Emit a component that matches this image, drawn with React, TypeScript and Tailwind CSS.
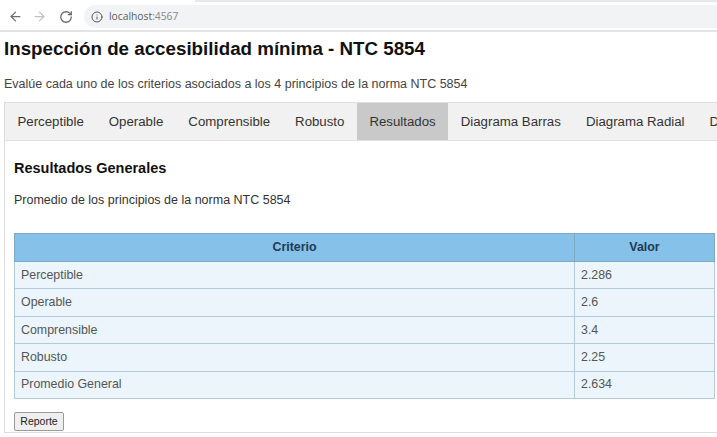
import { ArrowLeft, ArrowRight, RotateCw, Info } from "lucide-react";

const rows = [
  ["Perceptible", "2.286"],
  ["Operable", "2.6"],
  ["Comprensible", "3.4"],
  ["Robusto", "2.25"],
  ["Promedio General", "2.634"],
];
const tabs = ["Perceptible", "Operable", "Comprensible", "Robusto", "Resultados", "Diagrama Barras", "Diagrama Radial", "Diagrama"];

export default function App() {
  return (
    <div className="w-[717px] h-[437px] overflow-hidden bg-white font-['Liberation_Sans',Arial,sans-serif] text-[#333]">
      <div className="h-[2px] ml-[195px] bg-[#e8e8e8]" />
      <div className="h-[30px] flex items-center border-b-2 border-[#e4e4e4] pl-[8px] pt-[1px]">
        <ArrowLeft size={15} strokeWidth={2} className="text-[#6b6e72]" />
        <ArrowRight size={15} strokeWidth={2} className="ml-[9px] text-[#c0c2c5]" />
        <RotateCw size={14} strokeWidth={2.2} className="ml-[12px] text-[#666a6e]" />
        <div className="ml-[11px] flex-1 h-[23px] rounded-l-full bg-[#f1f3f4] flex items-center pl-[7px]">
          <Info size={12} strokeWidth={2} className="text-[#55585c]" />
          <span className="ml-[6px] text-[10.3px] font-['Open_Sans',sans-serif] text-[#5a5d61]">
            localhost<span className="text-[#85888c]">:4567</span>
          </span>
        </div>
      </div>
      <h1 className="ml-[4px] mt-[5px] text-[18.75px] leading-[24px] font-bold text-[#111]">Inspección de accesibilidad mínima - NTC 5854</h1>
      <p className="ml-[4px] mt-[14px] text-[12.5px] leading-[18px] text-[#444]">Evalúe cada uno de los criterios asociados a los 4 principios de la norma NTC 5854</p>
      <div className="ml-[4px] mt-[9px] h-[331px] border-l border-b border-[#dcdcdc]">
        <div className="h-[39px] flex bg-[#f1f1f1] border-y border-[#e0e0e0] overflow-hidden whitespace-nowrap text-[13.25px]">
          {tabs.map((t) => (
            <div key={t} className={"px-[12.5px] pt-[1px] flex items-center shrink-0 " + (t === "Resultados" ? "bg-[#c9c9c9]" : "")}>{t}</div>
          ))}
        </div>
        <div className="pl-[9px]">
          <h2 className="mt-[18px] text-[14.5px] leading-[18px] font-bold text-[#111]">Resultados Generales</h2>
          <p className="mt-[14px] text-[12.5px] leading-[18px]">Promedio de los principios de la norma NTC 5854</p>
          <table className="mt-[24px] w-[701px] table-fixed border-collapse text-[12.4px] text-[#555]">
            <colgroup>
              <col className="w-[560px]" />
              <col />
            </colgroup>
            <thead>
              <tr className="h-[28px] bg-[#85c1e9] text-[#1f3a52]">
                <th className="border border-[#7fa8c4] font-bold text-center">Criterio</th>
                <th className="border border-[#7fa8c4] font-bold text-center">Valor</th>
              </tr>
            </thead>
            <tbody>
              {rows.map(([a, b]) => (
                <tr key={a} className="h-[27.4px] bg-[#ebf5fb]">
                  <td className="border border-[#b4cad6] px-[6px]">{a}</td>
                  <td className="border border-[#b4cad6] px-[6px]">{b}</td>
                </tr>
              ))}
            </tbody>
          </table>
          <button className="mt-[13px] block w-[50px] h-[19px] bg-[#efefef] border border-[#9a9a9a] rounded-[2px] text-[10.5px] text-[#222]">Reporte</button>
        </div>
      </div>
    </div>
  );
}
